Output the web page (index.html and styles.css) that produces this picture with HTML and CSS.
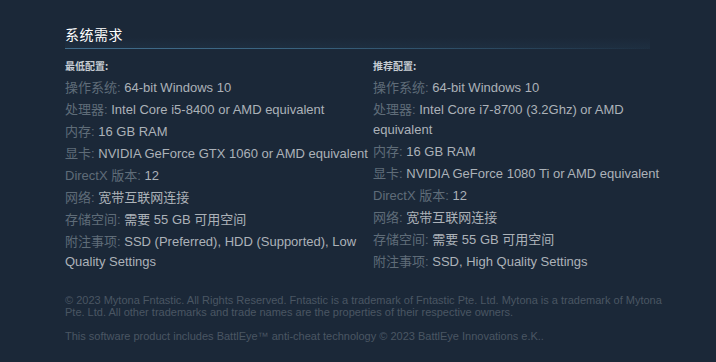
FILE: index.html
```html
<!DOCTYPE html>
<html lang="zh-CN">
<head>
<meta charset="utf-8">
<title>系统需求</title>
<link rel="stylesheet" href="styles.css">
</head>
<body>
<div class="page">
  <h2 class="section-title">系统需求</h2>
  <div class="sysreq">
    <div class="col">
      <div class="col-title">最低配置:</div>
      <ul class="req-list">
        <li><span class="lbl">操作系统:</span> 64-bit Windows 10</li>
        <li><span class="lbl">处理器:</span> Intel Core i5-8400 or AMD equivalent</li>
        <li><span class="lbl">内存:</span> 16 GB RAM</li>
        <li><span class="lbl">显卡:</span> NVIDIA GeForce GTX 1060 or AMD equivalent</li>
        <li><span class="lbl">DirectX 版本:</span> 12</li>
        <li><span class="lbl">网络:</span> 宽带互联网连接</li>
        <li><span class="lbl">存储空间:</span> 需要 55 GB 可用空间</li>
        <li><span class="lbl">附注事项:</span> SSD (Preferred), HDD (Supported), Low Quality Settings</li>
      </ul>
    </div>
    <div class="col">
      <div class="col-title">推荐配置:</div>
      <ul class="req-list">
        <li><span class="lbl">操作系统:</span> 64-bit Windows 10</li>
        <li><span class="lbl">处理器:</span> Intel Core i7-8700 (3.2Ghz) or AMD equivalent</li>
        <li><span class="lbl">内存:</span> 16 GB RAM</li>
        <li><span class="lbl">显卡:</span> NVIDIA GeForce 1080 Ti or AMD equivalent</li>
        <li><span class="lbl">DirectX 版本:</span> 12</li>
        <li><span class="lbl">网络:</span> 宽带互联网连接</li>
        <li><span class="lbl">存储空间:</span> 需要 55 GB 可用空间</li>
        <li><span class="lbl">附注事项:</span> SSD, High Quality Settings</li>
      </ul>
    </div>
  </div>
  <div class="legal">
    <p>© 2023 Mytona Fntastic. All Rights Reserved. Fntastic is a trademark of Fntastic Pte. Ltd. Mytona is a trademark of Mytona Pte. Ltd. All other trademarks and trade names are the properties of their respective owners.</p>
    <p>This software product includes BattlEye™ anti-cheat technology © 2023 BattlEye Innovations e.K..</p>
  </div>
</div>
</body>
</html>
```

FILE: styles.css
```css
html, body {
  margin: 0;
  padding: 0;
  background: #1b2838;
}

.page {
  padding: 26px 0 0 65px;
  width: 616px;
  font-family: "Liberation Sans", Arial, "Noto Sans CJK SC", sans-serif;
}

.section-title {
  margin: 0;
  padding: 0 0 5px 0;
  font-family: "Liberation Sans", "Noto Sans CJK SC", sans-serif;
  font-size: 14px;
  font-weight: normal;
  letter-spacing: 0.5px;
  line-height: 18px;
  color: #ffffff;
  background:
    linear-gradient(90deg, #416c8b 0%, #3a6481 35%, rgba(52,90,118,0.6) 70%, rgba(27,40,56,0) 95%) left bottom / 100% 1px no-repeat,
    linear-gradient(180deg, rgba(27,40,56,0) 0%, rgba(40,70,95,0.22) 100%) left bottom / 95% 12px no-repeat;
}

.sysreq {
  display: flex;
  gap: 4px;
  margin-top: 10px;
}

.col {
  width: 304px;
  flex: none;
}

.col-title {
  font-family: "Noto Sans CJK SC", sans-serif;
  font-size: 10px;
  font-weight: bold;
  line-height: 14px;
  color: #c7cdd3;
  margin-bottom: 5px;
}

.req-list {
  list-style: none;
  margin: 0;
  padding: 0;
}

.req-list li {
  font-size: 13px;
  line-height: 20px;
  margin-bottom: 2px;
  color: #acb2b8;
}

.lbl {
  color: #5f6c78;
}

.legal {
  margin-top: 20px;
  width: 612px;
  font-family: "Liberation Sans", Arial, sans-serif;
  font-size: 11px;
  line-height: 12px;
  color: #4a5663;
}

.legal p {
  margin: 0 0 12px 0;
}
```
